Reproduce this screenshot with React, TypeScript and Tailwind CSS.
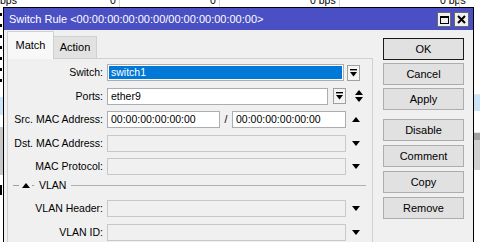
import React from "react";

const font = { fontFamily: '"Liberation Sans", Arial, sans-serif' };

function DropBtn({ className = "" }: { className?: string }) {
  return (
    <div className={"w-[13px] h-[16px] border border-[#a0a0a0] bg-[#f4f4f4] flex items-center justify-center " + className}>
      <svg width="7" height="8" viewBox="0 0 7 8">
        <rect x="0" y="0" width="7" height="1.4" fill="#000" />
        <path d="M0 3 L7 3 L3.5 7.5 Z" fill="#000" />
      </svg>
    </div>
  );
}

function Up() {
  return (
    <svg width="8" height="5" viewBox="0 0 8 5">
      <path d="M0 5 L8 5 L4 0 Z" fill="#000" />
    </svg>
  );
}
function Down() {
  return (
    <svg width="8" height="5" viewBox="0 0 8 5">
      <path d="M0 0 L8 0 L4 5 Z" fill="#000" />
    </svg>
  );
}
function UpDown() {
  return (
    <svg width="8" height="12" viewBox="0 0 8 12">
      <path d="M0 5 L8 5 L4 0 Z" fill="#000" />
      <path d="M0 7 L8 7 L4 12 Z" fill="#000" />
    </svg>
  );
}

function Label({ children }: { children: React.ReactNode }) {
  return <div className="w-[95px] text-right text-[10.5px] leading-none text-black pr-[0px]">{children}</div>;
}

function Btn({ children, def = false, className = "" }: { children: React.ReactNode; def?: boolean; className?: string }) {
  return (
    <div
      className={
        "h-[22px] w-[81px] flex items-center justify-center text-[11px] text-black bg-[#e1e1e1] border " +
        (def ? "border-[#1a1a1a]" : "border-[#adadad]") +
        " " +
        className
      }
    >
      {children}
    </div>
  );
}

function DisabledInput({ w = "w-[239px]" }: { w?: string }) {
  return <div className={w + " h-[17px] border border-[#c8c8c8] bg-[#f0f0f0]"} />;
}

export default function App() {
  return (
    <div className="relative w-[480px] h-[242px] overflow-hidden bg-white" style={font}>
      {/* background table */}
      <div className="absolute left-0 top-[-5px] w-[480px] h-[12px] text-[10.5px] text-black leading-none">
        <span className="absolute left-[0px] top-[0px]">bps</span>
        <span className="absolute left-[110px] top-[0px]">0</span>
        <span className="absolute left-[210px] top-[0px]">0</span>
        <span className="absolute left-[310px] top-[0px]">0 bps</span>
        <span className="absolute left-[440px] top-[0px]">0 bps</span>
      </div>
      <div className="absolute left-[119px] top-0 w-px h-[7px] bg-[#d8d8d8]" />
      <div className="absolute left-[219px] top-0 w-px h-[7px] bg-[#d8d8d8]" />
      <div className="absolute left-[339px] top-0 w-px h-[7px] bg-[#d8d8d8]" />
      <div className="absolute left-[459px] top-0 w-px h-[7px] bg-[#d8d8d8]" />
      {/* left strip */}
      <div className="absolute left-0 top-[7px] w-[3px] h-[235px] flex flex-col">
        <div className="h-[90px] flex flex-col gap-[8px] pt-[6px]">
          <div className="w-[2px] h-[3px] bg-black" />
          <div className="w-[2px] h-[3px] bg-black" />
          <div className="w-[2px] h-[3px] bg-black" />
          <div className="w-[2px] h-[3px] bg-black" />
          <div className="w-[2px] h-[3px] bg-black" />
          <div className="w-[2px] h-[3px] bg-black" />
          <div className="w-[2px] h-[3px] bg-black" />
        </div>
        <div className="h-[18px] bg-[#cce4f7]" />
        <div className="h-[12px]" />
        <div className="h-[48px] bg-[#c8c8c8]" />
        <div className="h-[10px] mt-[10px] w-[2px] bg-black" />
      </div>
      {/* right strip */}
      <div className="absolute left-[474px] top-[7px] w-[6px] h-[235px] flex flex-col">
        <div className="h-[88px] border-b border-[#e6e6e6]" />
        <div className="h-[16px] bg-[#cce4f7]" />
        <div className="h-[22px] border-b border-[#e6e6e6]" />
        <div className="h-[7px] bg-[#a0a0a0]" />
        <div className="h-[30px] bg-[#d0d0d0]" />
      </div>

      {/* window */}
      <div className="absolute left-[3px] top-[7px] w-[471px] h-[240px] border border-black bg-[#f0f0f0] flex flex-col">
        <div className="h-[22px] bg-[#4a50c4] flex items-center pl-[5px] text-white text-[11px] shrink-0">
          <span className="leading-none">Switch Rule &lt;00:00:00:00:00:00/00:00:00:00:00:00&gt;</span>
          <div className="ml-auto flex gap-[3px] pr-[4px] pt-[1px]">
            <div className="w-[14px] h-[15px] bg-[#f0f0f0] border border-[#6a6a6a] flex items-center justify-center">
              <div className="w-[9px] h-[8px] border border-black border-t-2" />
            </div>
            <div className="w-[15px] h-[15px] bg-[#f0f0f0] border border-[#6a6a6a] flex items-center justify-center">
              <svg width="9" height="9" viewBox="0 0 9 9">
                <path d="M1 1 L8 8 M8 1 L1 8" stroke="#000" strokeWidth="2" />
              </svg>
            </div>
          </div>
        </div>
        <div className="flex flex-1">
          {/* left: tabs and panel */}
          <div className="w-[369px] pl-[3px] pt-[1px] flex flex-col">
            <div className="flex items-end h-[27px]">
              <div className="w-[47px] h-[28px] border border-b-0 border-[#d0d0d0] bg-[#f8f8f8] flex items-center justify-center text-[11px] text-black relative top-[1px]">
                Match
              </div>
              <div className="w-[43px] h-[22px] border border-l-0 border-b-0 border-[#d0d0d0] bg-[#e2e2e2] flex items-center justify-center text-[11px] text-black">
                Action
              </div>
            </div>
            <div className="flex-1 border border-[#d0d0d0] bg-[#f0f0f0] pt-[5px] flex flex-col">
              {/* Switch */}
              <div className="flex items-center h-[17px]">
                <Label>Switch:</Label>
                <div className="ml-[4px] w-[237px] h-[17px] border border-[#abadb3] bg-white p-[1px]">
                  <div className="w-full h-full bg-[#0078d7] text-white text-[10.5px] leading-none flex items-center pl-[2px]">switch1</div>
                </div>
                <DropBtn className="ml-[3px]" />
              </div>
              {/* Ports */}
              <div className="flex items-center h-[17px] mt-[6.5px]">
                <Label>Ports:</Label>
                <div className="ml-[4px] w-[221px] h-[17px] border border-[#abadb3] bg-white text-[10.5px] leading-none flex items-center pl-[3px] text-black">ether9</div>
                <DropBtn className="ml-[5px]" />
                <div className="w-[23px] flex justify-center pl-[2px]"><UpDown /></div>
              </div>
              {/* Src MAC */}
              <div className="flex items-center h-[17px] mt-[6.5px]">
                <Label>Src. MAC Address:</Label>
                <div className="ml-[4px] w-[113px] h-[17px] border border-[#abadb3] bg-white text-[10.5px] leading-none flex items-center pl-[3px] text-black">00:00:00:00:00:00</div>
                <div className="w-[12px] text-center text-[10.5px] text-black leading-none">/</div>
                <div className="w-[114px] h-[17px] border border-[#abadb3] bg-white text-[10.5px] leading-none flex items-center pl-[3px] text-black">00:00:00:00:00:00</div>
                <div className="w-[19px] flex justify-center pl-[1px]"><Up /></div>
              </div>
              {/* Dst MAC */}
              <div className="flex items-center h-[17px] mt-[6.5px]">
                <Label>Dst. MAC Address:</Label>
                <div className="ml-[4px]"><DisabledInput /></div>
                <div className="w-[19px] flex justify-center pl-[1px]"><Down /></div>
              </div>
              {/* MAC Protocol */}
              <div className="flex items-center h-[17px] mt-[6.5px]">
                <Label>MAC Protocol:</Label>
                <div className="ml-[4px]"><DisabledInput /></div>
                <div className="w-[19px] flex justify-center pl-[1px]"><Down /></div>
              </div>
              {/* VLAN separator */}
              <div className="flex items-center h-[12px] mt-[4px] pl-[5px]">
                <div className="w-[6px] h-px bg-[#a0a0a0]" />
                <div className="ml-[3px]"><Up /></div>
                <div className="ml-[2px] w-[2px] h-px bg-[#a0a0a0]" />
                <span className="ml-[5px] text-[10.5px] leading-none text-black">VLAN</span>
                <div className="ml-[5px] flex-1 h-px bg-[#b0b0b0] mr-[6px]" />
              </div>
              {/* VLAN Header */}
              <div className="flex items-center h-[17px] mt-[9px]">
                <Label>VLAN Header:</Label>
                <div className="ml-[4px]"><DisabledInput /></div>
                <div className="w-[19px] flex justify-center pl-[1px]"><Down /></div>
              </div>
              {/* VLAN ID */}
              <div className="flex items-center h-[17px] mt-[6.5px]">
                <Label>VLAN ID:</Label>
                <div className="ml-[4px]"><DisabledInput /></div>
                <div className="w-[19px] flex justify-center pl-[1px]"><Down /></div>
              </div>
            </div>
          </div>
          {/* right: buttons */}
          <div className="ml-[10px] pt-[8px] flex flex-col">
            <Btn def>OK</Btn>
            <Btn className="mt-[3px]">Cancel</Btn>
            <Btn className="mt-[3px]">Apply</Btn>
            <Btn className="mt-[9px]">Disable</Btn>
            <Btn className="mt-[4px]">Comment</Btn>
            <Btn className="mt-[4px]">Copy</Btn>
            <Btn className="mt-[4px]">Remove</Btn>
          </div>
        </div>
      </div>
    </div>
  );
}
